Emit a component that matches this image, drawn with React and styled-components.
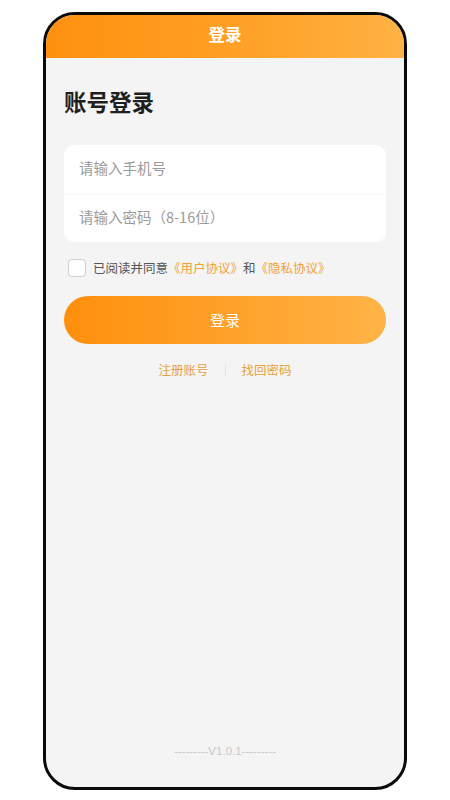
import React from 'react'
import styled, { createGlobalStyle } from 'styled-components'

const GlobalStyle = createGlobalStyle`
    html, body {
        margin: 0;
        padding: 0;
        background: #ffffff;
    }
    body {
        font-family: "Noto Sans CJK SC", "Noto Sans", sans-serif;
    }
`

const Page = styled.div`
    width: 450px;
    height: 800px;
    padding: 12px 0 0 43px;
    box-sizing: border-box;
`

const Phone = styled.div`
    width: 364px;
    height: 778px;
    box-sizing: border-box;
    border: 3.5px solid #0a0a0a;
    border-radius: 32px;
    overflow: hidden;
    background: #f4f4f4;
    display: flex;
    flex-direction: column;
`

const Header = styled.div`
    height: 43px;
    flex-shrink: 0;
    display: flex;
    align-items: center;
    justify-content: center;
    background: linear-gradient(90deg, #ff900e 0%, #ffa126 55%, #ffb244 100%);
    color: #fff;
    font-size: 16.5px;
    font-weight: 700;
    padding-bottom: 6px;
    box-sizing: border-box;
`

const Body = styled.div`
    flex: 1;
    padding: 0 18px;
    display: flex;
    flex-direction: column;
`

const Title = styled.h1`
    margin: 28px 0 0 0;
    font-size: 22.5px;
    line-height: 30px;
    font-weight: 700;
    color: #1f1f1f;
`

const Card = styled.div`
    margin-top: 29px;
    background: #fff;
    border-radius: 10px;
    overflow: hidden;
`

const Field = styled.input`
    display: block;
    width: 100%;
    height: 48.5px;
    box-sizing: border-box;
    border: none;
    outline: none;
    background: transparent;
    padding: 0 15px 4px;
    font-family: inherit;
    font-size: 14.5px;
    color: #333;
    ${props => props.divided && `border-top: 1px solid #f6f6f6;`}
    &::placeholder {
        color: #9a9a9a;
    }
`

const AgreeRow = styled.label`
    display: flex;
    align-items: center;
    margin: 16px 0 0 4px;
    font-size: 12.5px;
    color: #555;
`

const Box = styled.span`
    width: 18px;
    height: 18px;
    box-sizing: border-box;
    border: 1px solid #cfcfcf;
    border-radius: 4px;
    background: #fff;
    margin-right: 7px;
`

const Link = styled.span`
    color: ${props => props.c || '#f0a23a'};
`

const LoginButton = styled.button`
    margin-top: 19px;
    height: 48px;
    width: 100%;
    border: none;
    border-radius: 24px;
    background: linear-gradient(90deg, #ff8f0c 0%, #ffa22c 55%, #ffb447 100%);
    color: #fff;
    font-family: inherit;
    font-size: 15px;
    padding-bottom: 3px;
    cursor: pointer;
`

const Links = styled.div`
    margin-top: 16px;
    display: flex;
    justify-content: center;
    align-items: center;
    font-size: 12.5px;
    line-height: 20px;
    color: #e6a23e;
`

const Sep = styled.span`
    width: 1px;
    height: 12px;
    background: #e2e2e2;
    margin: 0 16px;
`

const Footer = styled.div`
    margin-top: auto;
    padding-bottom: 30px;
    text-align: center;
    font-family: "Liberation Sans", Arial, sans-serif;
    font-size: 11.5px;
    color: #c8c8c8;
`

export default function App() {
    return (
        <Page>
            <GlobalStyle />
            <Phone>
                <Header>登录</Header>
                <Body>
                    <Title>账号登录</Title>
                    <Card>
                        <Field placeholder="请输入手机号" />
                        <Field divided type="password" placeholder="请输入密码（8-16位）" />
                    </Card>
                    <AgreeRow>
                        <Box />
                        已阅读并同意<Link>《用户协议》</Link>和<Link>《隐私协议》</Link>
                    </AgreeRow>
                    <LoginButton>登录</LoginButton>
                    <Links>
                        <span>注册账号</span>
                        <Sep />
                        <span>找回密码</span>
                    </Links>
                    <Footer>---------V1.0.1---------</Footer>
                </Body>
            </Phone>
        </Page>
    )
}
